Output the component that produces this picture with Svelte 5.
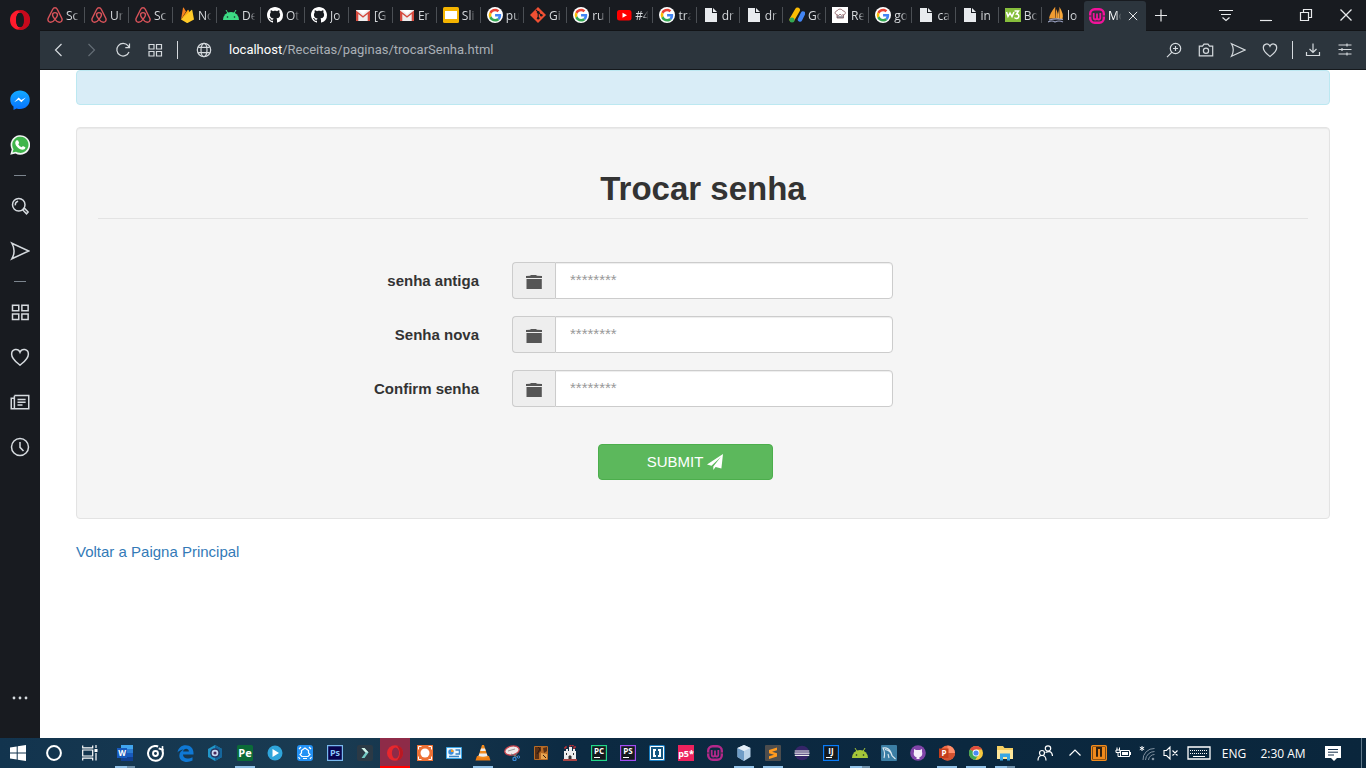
<script>
  const line = 'fill="none" stroke="#d5dade" stroke-width="1.2"';
  const google = '<circle cx="24" cy="24" r="24" fill="#fff"/><g transform="translate(5 5) scale(.8)"><path fill="#ea4335" d="M24 9.5c3.5 0 6.700 1.200 9.200 3.600l6.900-6.900C35.900 2.400 30.500 0 24 0 14.600 0 6.500 5.400 2.600 13.200l8 6.200C12.400 13.700 17.700 9.500 24 9.500z"/><path fill="#4285f4" d="M47 24.600c0-1.600-.2-3.100-.4-4.600H24v9h12.900c-.6 3-2.200 5.500-4.800 7.200l7.700 6C44.400 38 47 31.800 47 24.600z"/><path fill="#fbbc05" d="M10.500 28.600a14.500 14.500 0 0 1 0-9.200l-8-6.200a24 24 0 0 0 0 21.600z"/><path fill="#34a853" d="M24 48c6.500 0 11.900-2.100 15.900-5.800l-7.700-6c-2.200 1.500-4.900 2.300-8.200 2.300-6.300 0-11.600-4.200-13.500-9.900l-8 6.200C6.500 42.600 14.600 48 24 48z"/></g>';
  const octocat = 'M8 0C3.580 0 0 3.580 0 8c0 3.540 2.290 6.530 5.470 7.590.4.070.55-.17.55-.38 0-.19-.01-.82-.01-1.490-2.010.37-2.530-.49-2.690-.94-.09-.23-.48-.94-.82-1.130-.28-.15-.68-.52-.01-.53.63-.01 1.080.58 1.230.82.72 1.210 1.870.87 2.330.66.070-.52.28-.87.51-1.070-1.780-.2-3.640-.89-3.640-3.950 0-.87.31-1.590.82-2.150-.08-.2-.36-1.020.08-2.120 0 0 .67-.21 2.200.82.64-.18 1.320-.27 2-.27s1.360.09 2 .27c1.530-1.040 2.200-.82 2.200-.82.44 1.100.16 1.920.08 2.120.51.56.82 1.270.82 2.150 0 3.070-1.870 3.750-3.650 3.950.29.25.54.73.54 1.480 0 1.070-.01 1.930-.01 2.200 0 .21.15.46.55.38A8 8 0 0 0 16 8c0-4.420-3.580-8-8-8z';
  const wamp = (c) => `<rect x="1.200" y="1.200" width="13.600" height="13.600" rx="4.500" fill="none" stroke="${c}" stroke-width="2.400"/><path d="M4.700 5v4.500q0 2 1.600 2T8 9.500V5.500v4q0 2 1.700 2t1.600-2V5" fill="none" stroke="${c}" stroke-width="1.800"/><path d="M0 8h2.500M13.500 8H16" stroke="#2c353d" stroke-width="1.200"/>`;
  const doc = '<path d="M2 1h7v5h5v9H2z" fill="#e8ebee"/><path d="M10 1l4 4h-4z" fill="#e8ebee"/>';
  const gmail = '<path d="M1 3h14v11H1z" fill="#eee"/><path d="M1 14V3.500L8 9l7-5.500V14h-2.300V7L8 10.800 3.300 7v7z" fill="#d54a3e"/><path d="M3 3h10L8 7z" fill="#fff"/>';
  const jet = (t, c) => `<rect x=".6" y=".6" width="14.800" height="14.800" fill="#15191d" stroke="${c}" stroke-width="1.200"/><text x="8" y="9" text-anchor="middle" font-size="8" font-weight="700" fill="#fff">${t}</text><path d="M3 12.500h6" stroke="#fff"/>`;
  const droid = (c) => `<path d="M0 13a8 8 0 0 1 16 0z" fill="${c}"/><path d="M3 3l2 3.500M13 3l-2 3.500" stroke="${c}"/><circle cx="4.500" cy="10" r=".8" fill="#14242b"/><circle cx="11.500" cy="10" r=".8" fill="#14242b"/>`;

  const art = {
    airbnb: '<path d="M8 12.400C6.300 10.400 5.500 9.100 5.500 8c0-1.500 1.100-2.400 2.500-2.400s2.500.9 2.500 2.400c0 1.100-.8 2.400-2.500 4.400zm0 0C6.700 14.200 5.200 15.200 3.700 15.200c-2 0-3.400-1.700-2.500-4L5.600 2.500C6.200 1.300 6.900.8 8 .8s1.800.5 2.400 1.700l4.400 8.700c.9 2.300-.5 4-2.500 4-1.500 0-3-1-4.300-2.800z" fill="none" stroke="#d9535a" stroke-width="1.400"/>',
    firebase: '<path d="M2 12.500L4 .8q.3-.6.8 0L7 4.500z" fill="#f58220"/><path d="M2 12.500L8.700 3q.4-.6.8 0L12 8z" fill="#ffa712"/><path d="M2 12.500L12.500 3q.7-.5.800.2L15 12.500l-6 3.200q-.8.400-1.500 0z" fill="#ffca28"/>',
    android: droid('#3ddc84'), droid2: droid('#a4c639'),
    github: `<path d="${octocat}" fill="#fff"/>`,
    gmail, doc,
    slides: '<rect width="16" height="16" rx="1.500" fill="#f4b400"/><path d="M2 4h12v8H2z" fill="#fff"/>',
    git: '<path d="M8 0l8 8-8 8-8-8z" fill="#f05033"/><path d="M6 2.800l2.200 2.400v6M8.200 5.200l3.300 3.300" fill="none" stroke="#191b1f" stroke-width="1.100"/><circle cx="8.200" cy="5.300" r="1.300" fill="#191b1f"/><circle cx="8.200" cy="11.300" r="1.300" fill="#191b1f"/><circle cx="11.300" cy="8.300" r="1.300" fill="#191b1f"/>',
    youtube: '<rect x="1" y="3" width="14.500" height="10.500" rx="2.500" fill="#f00"/><path d="M6.500 5.700v5L11 8.200z" fill="#fff"/>',
    ads: '<path d="M8.500 3L3 12.500" stroke="#fbbc04" stroke-width="5" stroke-linecap="round"/><path d="M14 6.500L11 12.500" stroke="#4285f4" stroke-width="4.500" stroke-linecap="round"/><circle cx="3" cy="13" r="2.500" fill="#34a853"/>',
    chef: '<path d="M0 0h16v16H0z" fill="#fff"/><path d="M5 11V7.500C2.500 7.500 2.500 4 5 4c1-2.500 5-2.500 6 0 3-.2 3 3.500.5 4v3zM5 8q2 1.500 3-1 1 2.500 3.500.5" fill="none" stroke="#87555b" stroke-width=".8"/><path d="M5 10h6" stroke="#445"/>',
    w3: '<path d="M0 1h16v14H0z" fill="#86be3c"/><path d="M1.500 5l1.500 4.500L5 6l2 3.500L9 5" fill="none" stroke="#fff" stroke-width="1.500"/><path d="M9.500 4h4L11.500 7c3-.2 3.200 4.500 0 4.500q-1.500 0-2-1" fill="none" stroke="#fff" stroke-width="1.500"/>',
    sails: '<path d="M7 0Q2 6 1 11.500h6zM8 2q3 5 1 9.500H7z" fill="#ee9b31"/><path d="M11.500 0q4.500 7 3 12H9z" fill="#f8a83a"/><path d="M7.500 0v12M11.500 0v12" stroke="#704623" stroke-width=".6"/><path d="M1 13q7-2 14-.5M0 15q4-2 7 0 4-2 8 0" fill="none" stroke="#9aa1c0" stroke-width="1.200"/>',
    wamp: wamp('#f2129a'), wamp2: wamp('#b3288a'),
    back: `<path d="M10.500 2l-6 6 6 6" ${line}/>`,
    forward: '<path d="M5.500 2l6 6-6 6" fill="none" stroke="#646d75" stroke-width="1.200"/>',
    reload: `<path d="M14 10A6.300 6.300 0 1 1 13 3.700L14.200 5.500M14.500 1.500v4.200h-4.200" ${line}/>`,
    grid: `<path d="M2 2.500h5v4.500H2zM9.500 2.500h5v4.500h-5zM2 9.500h5V14H2zM9.500 9.500h5V14h-5z" ${line}/>`,
    globe: `<circle cx="8" cy="8" r="6.700" ${line}/><ellipse cx="8" cy="8" rx="3" ry="6.700" ${line}/><path d="M2.300 5.300h11.400M2.300 10.700h11.400" ${line}/>`,
    zoom: `<circle cx="9.500" cy="6.500" r="5.200" ${line}/><path d="M6 10.200l-5 5M7 6.500h5M9.500 4v5" ${line}/>`,
    camera: `<path d="M1.300 4.200h3.200l1.500-2h4l1.500 2h3.200v9.600H1.300z" ${line}/><circle cx="8" cy="8.700" r="2.600" ${line}/>`,
    send: `<path d="M1.500 1.800L15 8 1.500 14.200Q5 8 1.500 1.800z" ${line}/>`,
    heart: `<path d="M8 14.500C5 12 1.300 9.500 1.300 5.700c0-4.200 5.200-5 6.700-1.500 1.500-3.500 6.700-2.700 6.700 1.500 0 3.800-3.700 6.300-6.700 8.800z" ${line}/>`,
    download: `<path d="M8 1.500v9M4.500 7L8 10.500 11.500 7M1.500 10v3.500h13V10" ${line}/>`,
    sliders: `<path d="M1.500 3h13M1.500 7.500h13M1.500 12h13M10 1.500v3M5 6v3M10 10.500v3" ${line}/>`,
    close: '<path d="M2.500 2.500l11 11M13.500 2.500l-11 11" fill="none" stroke="#e8eaec" stroke-width="1.300"/>',
    plus: '<path d="M8 2.500v12M2 8.500h12" stroke="#e8eaec" stroke-width="1.200"/>',
    tabs: '<path d="M1 3.500h14M3 7.500h10M4.500 10.500L8 13.500l3.500-3" fill="none" stroke="#e8eaec" stroke-width="1.200"/>',
    min: '<path d="M2 13.500h12" stroke="#e8eaec" stroke-width="1.200"/>',
    restore: '<path d="M2.500 5.500h8v8h-8zM5.500 5V2.500h8v8H11" fill="none" stroke="#e8eaec" stroke-width="1.200"/>',
    opera: '<path fill-rule="evenodd" d="M8 0c4.600 0 8 3.500 8 8s-3.400 8-8 8-8-3.500-8-8 3.400-8 8-8zm0 2.200C5.800 2.200 5 5 5 8s.8 5.800 3 5.800S11 11 11 8s-.8-5.800-3-5.800z" fill="#ff1b2d"/><path d="M8 0c4.600 0 8 3.500 8 8s-3.400 8-8 8c-1 0-2-.2-2.500-.6C13 14 12.500 2 5.500.6 6.200.1 7 0 8 0z" fill="#a70014" fill-opacity=".65"/><ellipse cx="8" cy="8" rx="3.200" ry="5.800" fill="#181b20"/>',
    messenger: '<defs><linearGradient id="mg" x2="0" y2="1"><stop stop-color="#12aaff"/><stop offset="1" stop-color="#0872ff"/></linearGradient></defs><path d="M8 .3C3.500.3.200 3.500.200 7.700c0 2.300 1 4.200 2.600 5.500V16l2.500-1.300c.9.300 1.800.4 2.700.4 4.500 0 7.800-3.200 7.800-7.400S12.500.3 8 .3z" fill="url(#mg)"/><path d="M3.300 9.800l3.600-3.900L9 8l3.700-2.100-3.600 3.900-2.200-2z" fill="#fff"/>',
    whatsapp: '<path d="M.2 15.800l1.200-4.200A7.800 7.800 0 1 1 4.400 14.700z" fill="#f3f6f4"/><path d="M2 14l.8-2.700a6.500 6.500 0 1 1 2 2z" fill="#3fb54b"/><path d="M5.500 4.200l1 .1.800 2-.7 1q1 1.900 2.800 2.500l.9-1 2 1c0 1.500-1.300 2-2.300 2C7 11.500 4.300 8.500 4.200 6.300c0-.9.600-2 1.300-2.100z" fill="#fff"/>',
    search: `<circle cx="7" cy="7" r="5" ${line}/><path d="M4.300 7.500a3 3 0 0 1 2.200-3.300M10.500 10.700l1-1 3 3.100-1.300 1.500-3-3.100z" ${line}/>`,
    news: `<path d="M3.500 2.800h11.500v10.500H1V5h2.500v8M6 6h6.500M6 8.200h6.500M6 10.400h4M3.500 3v8" ${line}/>`,
    clock: `<circle cx="8" cy="8" r="6.800" ${line}/><path d="M8 4v4.300l2.800 2.900" ${line}/>`,
    dots: '<circle cx="2" cy="8" r="1.400" fill="#d5dade"/><circle cx="8" cy="8" r="1.400" fill="#d5dade"/><circle cx="14" cy="8" r="1.400" fill="#d5dade"/>',
    windows: '<path d="M0 2.500L6.700 1.500V7.500H0zM7.700 1.300L16 0v7.500H7.700zM0 8.500h6.700v6L0 13.500zM7.700 8.500H16V16l-8.300-1.300z" fill="#fff"/>',
    cortana: '<circle cx="8" cy="8" r="6.900" fill="none" stroke="#fff" stroke-width="2"/>',
    taskview: '<path d="M.7.500v2.300h10V.500M.7 15.500v-2.300h10v2.300M.7 5h10v6H.7zM14 0v3M14 8v7.500" fill="none" stroke="#fff" stroke-width="1.200"/><path d="M12.500 4h3v3h-3z" fill="#fff"/>',
    word: '<path d="M4 0h12v4H4z" fill="#41a5ee"/><path d="M4 4h12v4H4z" fill="#2b7cd3"/><path d="M4 8h12v4H4z" fill="#185abd"/><path d="M4 12h12v4H4z" fill="#103f91"/><path d="M0 3h10v10H0z" fill="#185abd"/><text x="5" y="11" text-anchor="middle" font-size="8" font-weight="700" fill="#fff">W</text>',
    groove: '<path d="M10.500 1.400A7 7 0 1 0 14.700 6V4.500L11 3.200" fill="none" stroke="#fff" stroke-width="1.900"/><circle cx="8" cy="8" r="2.300" fill="none" stroke="#fff" stroke-width="1.800"/><path d="M14.600 1v5" stroke="#fff" stroke-width="1.500"/>',
    edge: '<path d="M.5 7C1.300 2.800 4 .3 8.200.3c5 0 7.800 3.500 7.300 8.700H5.600c.2 4.500 5.400 4.600 9 2.500v3.200C9 17.500 2 15.500 2.200 9.800 2.400 7 4 5.300 6.200 4.300 4 4.500 1.800 5.400.5 7zm5.200-1h5.500c0-3.300-5-3.300-5.500 0z" fill="#0f78d4"/>',
    hexa: '<path d="M8 0l7 4v8l-7 4-7-4V4z" fill="#2196c9"/><path d="M8 0l7 4v8l-7 4z" fill="#15669c"/><circle cx="8" cy="8" r="4.800" fill="#253563"/><circle cx="8" cy="8" r="3.300" fill="#cad8ef"/><circle cx="8" cy="8" r="1.600" fill="#48295d"/>',
    pe: '<rect width="16" height="16" rx="1.500" fill="#0b6b38"/><text x="8" y="12" text-anchor="middle" font-size="11" font-weight="700" fill="#fff">Pe</text>',
    play: '<circle cx="8" cy="8" r="7.500" fill="#2fa5db"/><path d="M5.500 4v8l6.500-4z" fill="#fff"/>',
    hands: '<rect width="16" height="16" rx="3" fill="#2391f4"/><path d="M5 11.500L3 9.500l1.500-1.500V5.500L8 3l3.500 2.500V8L13 9.500l-2 2zM6 13.500h4M2 4l2-2M12 2l2 2M1.500 12l1.500 2M14.500 12L13 14" fill="none" stroke="#fff" stroke-width="1.200"/>',
    ps: '<path d="M.6.600h14.800v14.800H.6z" fill="#08044e" stroke="#78b8ee" stroke-width="1.200"/><text x="8" y="11" text-anchor="middle" font-size="9" font-weight="700" fill="#8cc8fb">Ps</text>',
    film: '<rect width="16" height="16" rx="2" fill="#2b3945"/><path d="M4.500 3h3l4 4.500-4 5.500h-3l4-5.500z" fill="#72c9c4"/><path d="M4.500 3h3l4 4.500H8.500z" fill="#d4f2ea"/>',
    operaTask: '<ellipse cx="8" cy="8" rx="8" ry="7.800" fill="#e8272d"/><ellipse cx="8.500" cy="8" rx="3.600" ry="5.500" fill="#8e2b48"/><path d="M10 .4a7.800 7.800 0 0 1 0 15.200Q13 12 13 8t-3-7.600z" fill="#b91822"/>',
    rec: '<path d="M0 0h16v16H0z" fill="#ed7135"/><circle cx="8" cy="8" r="4.500" fill="#fff"/><path d="M1.500 4.500v-3h3M11.500 1.500h3v3M14.500 11.500v3h-3M4.500 14.500h-3v-3" fill="none" stroke="#fff"/>',
    card: '<path d="M.5 2.500h15v11H.5z" fill="#e9f6ff" stroke="#3aa4e5"/><circle cx="5" cy="7" r="2.700" fill="#3c8cda"/><path d="M5 7V4.300A2.700 2.700 0 0 1 7.700 7z" fill="#f59b26"/><path d="M9.500 5h4v4h-4M3 11.500h10" fill="none" stroke="#3a83c4" stroke-width="1.500"/>',
    vlc: '<path d="M2 11h12l1.500 4.500H.5z" fill="#ef7d12"/><path d="M7 0h2l4 12.500q-5 2-10 0z" fill="#f38a1c"/><path d="M6 3.500h4l.8 2.500H5.200zM4.300 8.500h7.400l.8 2.400q-4.500 1.500-9 0z" fill="#eee"/>',
    snip: '<ellipse cx="8" cy="5.500" rx="7.300" ry="4.400" transform="rotate(-12 8 5.500)" fill="#f1e8e9" stroke="#c9434c" stroke-width="1.300"/><path d="M4 6l7-2" stroke="#999"/><path d="M7 9l7 3M13 8l-3 5" stroke="#777"/><circle cx="10.500" cy="14" r="1.600" fill="none" stroke="#3987d3" stroke-width="1.300"/><circle cx="14.500" cy="12" r="1.200" fill="none" stroke="#3987d3"/>',
    brown: '<rect x="1" y="1" width="14" height="14" rx="1" fill="#b96b25"/><path d="M2 2h6v4L6 8v6H2zM10 3l4-1v4l-3 2z" fill="#5a3015"/><path d="M8 8l6 1v5H8z" fill="#e8a450"/><path d="M5 2l2 2-3 5M10 10l3 3" fill="none" stroke="#2f1b12"/>',
    castle: '<path d="M2 6h2V4h2v2h1V2h3v4h1V4h2v2h1v9H2z" fill="#eee"/><path d="M8 2V0h3v1.500M3 4V2h2M12 4V2h2" fill="none" stroke="#e33"/><path d="M4.500 8v2M11.500 8v2M7 14v-3h2v3z" fill="#333" stroke="#333"/><path d="M1 15h14" stroke="#a44" stroke-width="2"/>',
    pc: jet('PC', '#21d789'), phps: jet('PS', '#a24df2'), ij: jet('IJ', '#087cfa'),
    brackets: '<rect width="16" height="16" rx="1.500" fill="#1a80c4"/><path d="M1.500 1.500h13v13h-13z" fill="#14567f" stroke="#fff"/><path d="M4 4h3v2H6v4h1v2H4zM12 4H9v2h1v4H9v2h3z" fill="#fff"/>',
    p5: '<path d="M0 0h16v16H0z" fill="#ed225d"/><text x="8" y="12" text-anchor="middle" font-size="9" font-weight="700" fill="#fff">p5*</text>',
    vbox: '<path d="M8 0l6.500 3v9L8 16l-6.500-4V3z" fill="#b8d2e8"/><path d="M1.500 3L8 6v10l-6.500-4z" fill="#6e9cc6"/><path d="M1.500 3L8 0l6.500 3L8 6z" fill="#e3eef7"/>',
    sublime: '<rect width="16" height="16" rx="1" fill="#4d4d4d"/><path d="M12 2.500L4 5v3.200l5 1.600-5 1.500v2.700l8-2.500V8.300L7 6.700l5-1.500z" fill="#ff9a1f"/>',
    eclipse: '<circle cx="8" cy="8" r="7.300" fill="#352568"/><path d="M.7 6h14.600M.5 8.200h15M.8 10.400h14.400" stroke="#eee" stroke-width="1.200"/>',
    mysql: '<rect width="16" height="16" rx="1" fill="#3b7ea4"/><path d="M3 13Q4.500 8 2 3q5.500-1 8 4.500l1.200 3.500 3.300 3M4 4.500q6 1 7 6.500M7 9l1 4" fill="none" stroke="#dbe8f0" stroke-width="1.100"/>',
    ghdesk: '<circle cx="8" cy="8" r="7.800" fill="#8044a8"/><path d="M4 4l2 1h4l2-1v3c1 3-1 5-2.500 5v2h-3v-2C5 12 3 10 4 7z" fill="#f5eef9"/>',
    ppt: '<circle cx="8.500" cy="8" r="7.500" fill="#ed6c47"/><path d="M8.500.5A7.500 7.500 0 0 1 16 8H8.500z" fill="#ff8f6b"/><path d="M1 8h15a7.500 7.500 0 0 1-15 0z" fill="#d35230"/><path d="M0 3.500h9.500V13H0z" fill="#c43e1c"/><text x="5" y="11" text-anchor="middle" font-size="8" font-weight="700" fill="#fff">P</text>',
    chrome: '<circle cx="8" cy="8" r="7" fill="#f7c93e"/><path d="M8 8L1.900 4.500A7 7 0 0 1 14.100 4.500H8z" fill="#dd4b3e"/><path d="M8 8L1.900 4.500a7 7 0 0 0 5.300 10.400L10.500 9.500z" fill="#3fa757"/><circle cx="8" cy="8" r="3.400" fill="#fff"/><circle cx="8" cy="8" r="2.600" fill="#4a8af4"/>',
    explorer: '<path d="M0 1h6l1.500 2H16v10H0z" fill="#f4cf63"/><path d="M0 5h16v9H0z" fill="#ffe79a"/><path d="M3 15.500V8.500h10v7h-3V12H6v3.500z" fill="#38a6e3"/>',
    people: '<g fill="none" stroke="#fff" stroke-width="1.200"><circle cx="5" cy="8" r="2.500"/><path d="M1 15.500q0-5 4-5t4 5"/><circle cx="11" cy="3.500" r="2.700"/><path d="M8.500 7.500q6.500-3 7 3.500"/></g>',
    up: '<path d="M2.500 10.500L8 5l5.500 5.500" fill="none" stroke="#fff" stroke-width="1.200"/>',
    wampTray: '<rect x=".7" y=".7" width="14.600" height="14.600" rx="1" fill="#33220f" stroke="#f08a1c" stroke-width="1.400"/><path d="M2 2h3v9q0 1 1 1t1-1V4h2v7q0 1 1 1t1-1V2h3v12H2z" fill="#f08a1c"/>',
    battery: '<path d="M5.500 5.500h9v6h-9zM15.500 7v3M2 2.500v3M4.500 2.500v3M1 5h4v2.500H1zM3 8v3.500h3" fill="none" stroke="#fff"/><path d="M7 7h6v3H7z" fill="#fff"/>',
    wifi: '<path d="M3 1v5M.8 2.200l4.400 2.500M5.200 2.200L.8 4.700" stroke="#fff"/><g fill="none" stroke="#8091a0"><path d="M4 15A11 11 0 0 1 15.500 3.500M6.500 15A9 9 0 0 1 15.500 6.500M9.500 15A6 6 0 0 1 15.500 9.500"/></g><circle cx="14" cy="14" r="1.300" fill="#8091a0"/>',
    mute: '<path d="M1 5.500h2.500L7 2v12L3.500 10.500H1zM9.500 5.500l5 5M14.500 5.500l-5 5" fill="none" stroke="#fff" stroke-width="1.100"/>',
    note: '<path d="M0 1h16v12h-4l-3 3-3-3H0z" fill="#fff"/><path d="M3 4.500h10M3 7.200h10M3 10h6" stroke="#17304a"/>'
  };

  const tabs = [
    ['airbnb', 'Sc'], ['airbnb', 'Ur'], ['airbnb', 'Sc'], ['firebase', 'No'], ['android', 'De'], ['github', 'Ot'], ['github', 'Jo'],
    ['gmail', '[G'], ['gmail', 'Er'], ['slides', 'Sli'], ['google', 'pu'], ['git', 'Gi'], ['google', 'ru'], ['youtube', '#4'], ['google', 'tra'],
    ['doc', 'dr'], ['doc', 'dr'], ['ads', 'Go'], ['chef', 'Re'], ['google', 'go'], ['doc', 'ca'], ['doc', 'in'], ['w3', 'Bo'], ['sails', 'lo']
  ];
  const side = ['messenger', 'whatsapp', '-', 'search', 'send', '-', 'grid', 'heart', 'news', 'clock'];
  const apps = [
    ['word', 2], ['groove'], ['edge'], ['hexa'], ['pe', 1], ['play'], ['hands'], ['ps'], ['film'], ['operaTask', 3], ['rec'], ['card'],
    ['vlc', 1], ['snip'], ['brown'], ['castle'], ['pc'], ['phps'], ['brackets'], ['p5'], ['wamp2'], ['vbox', 1], ['sublime', 1],
    ['eclipse'], ['ij'], ['droid2', 2], ['mysql'], ['ghdesk'], ['ppt', 1], ['chrome', 1], ['explorer', 2]
  ];
  const fields = [['antiga', 'senha antiga'], ['nova', 'Senha nova'], ['confirm', 'Confirm senha']];
</script>

{#snippet icon(name, size = 16)}
  <svg class="icon" width={size} height={size} viewBox={name === 'google' ? '0 0 48 48' : '0 0 16 16'} aria-hidden="true">{@html name === 'google' ? google : art[name]}</svg>
{/snippet}

<div class="desktop">
  <div class="browser">
    <aside>
      <button class="menu" aria-label="Opera">{@render icon('opera', 20)}</button>
      {#each side as s}
        {#if s === '-'}<span class="dash"></span>
        {:else}<button class="side" aria-label={s}>{@render icon(s, 20)}</button>{/if}
      {/each}
      <button class="side more" aria-label="Mais">{@render icon('dots')}</button>
    </aside>
    <div class="window">
      <div class="tabbar">
        <div class="tabs">
          {#each tabs as [ic, label], i}
            <button class="tab" class:wide={i < 10}>{@render icon(ic)}<span>{label}</span></button>
          {/each}
        </div>
        <div class="tab active">{@render icon('wamp')}<span>Mo</span><button class="x" aria-label="Fechar aba">{@render icon('close', 12)}</button></div>
        <button class="add" aria-label="Nova aba">{@render icon('plus')}</button>
        <div class="controls">
          {#each ['tabs', 'min', 'restore', 'close'] as c}<button aria-label={c}>{@render icon(c)}</button>{/each}
        </div>
      </div>
      <nav class="toolbar">
        {#each ['back', 'forward', 'reload', 'grid'] as c}<button aria-label={c}>{@render icon(c)}</button>{/each}
        <span class="bar"></span>
        <button class="site" aria-label="Site">{@render icon('globe')}</button>
        <div class="url"><b>localhost</b>/Receitas/paginas/trocarSenha.html</div>
        {#each ['zoom', 'camera', 'send', 'heart'] as c}<button aria-label={c}>{@render icon(c)}</button>{/each}
        <span class="bar right"></span>
        {#each ['download', 'sliders'] as c}<button aria-label={c}>{@render icon(c)}</button>{/each}
      </nav>
      <main>
        <div class="container">
          <div class="alert"></div>
          <form class="well" onsubmit={(e) => e.preventDefault()}>
            <h2>Trocar senha</h2>
            {#each fields as [id, label]}
              <div class="row">
                <label for={id}>{label}</label>
                <div class="group">
                  <span class="addon"><svg width="16" height="14" viewBox="0 0 16 14" aria-hidden="true"><path d="M0 3V1L4 .8 5 0h5l1 .8 5 .2v2zM.5 4h15.300v10H.5z" fill="#555" /></svg></span>
                  <input {id} type="password" placeholder="********" />
                </div>
              </div>
            {/each}
            <div class="row actions">
              <div class="center"><button type="submit">SUBMIT <svg width="16" height="16" viewBox="0 0 16 16" aria-hidden="true"><path d="M16 0L0 10.500l4.500 1.300L13.800 3 6.300 12.400V16l2.300-2.900 5.800 1.400z" fill="#fff" /></svg></button></div>
            </div>
          </form>
          <a href="#principal">Voltar a Paigna Principal</a>
        </div>
      </main>
    </div>
  </div>
  <footer>
    <div class="system">
      {#each ['windows', 'cortana', 'taskview'] as c}<button aria-label={c}>{@render icon(c)}</button>{/each}
    </div>
    <div class="apps">
      {#each apps as [ic, st], i}
        <button class:wide={i < 10} class:open={st === 1} class:multi={st === 2} class:current={st === 3} aria-label={ic}>{@render icon(ic, ic === 'groove' || ic === 'edge' ? 17 : 16)}</button>
      {/each}
    </div>
    <div class="tray">
      {#each ['people', 'up', 'wampTray', 'battery', 'wifi', 'mute'] as c}<button aria-label={c}>{@render icon(c)}</button>{/each}
      <button class="keys" aria-label="Teclado"><svg width="24" height="14" viewBox="0 0 24 14" aria-hidden="true"><path d="M1 1h22v12H1z" fill="none" stroke="#fff" stroke-width="1.300" /><path d="M3 4.500h18M3 7.500h18" stroke="#fff" stroke-dasharray="1 1" /><path d="M6 10.500h12" stroke="#fff" /></svg></button>
      <span class="lang">ENG</span>
      <time>2:30 AM</time>
      <button class="notes" aria-label="Notificações">{@render icon('note')}</button>
      <span class="peek"></span>
    </div>
  </footer>
</div>

<style>
  :global(body) { margin: 0; }
  .desktop, .desktop * { box-sizing: border-box; }
  .desktop { display: flex; flex-direction: column; min-height: 100vh; font-family: "Open Sans", "Noto Sans", sans-serif; background: #fff; }
  button { border: 0; padding: 0; margin: 0; background: none; color: inherit; font: inherit; display: flex; align-items: center; justify-content: center; }
  svg { display: block; flex: none; }
  .browser { flex: 1; display: flex; }
  aside { width: 40px; flex: none; background: #181b20; display: flex; flex-direction: column; align-items: center; }
  .menu { height: 40px; width: 40px; margin-bottom: 37px; }
  .side { width: 40px; height: 45px; }
  .dash { width: 12px; height: 16px; flex: none; background: linear-gradient(#7c858e, #7c858e) center / 12px 1px no-repeat; }
  .more { margin-top: auto; margin-bottom: 18px; }
  .window { flex: 1; min-width: 0; display: flex; flex-direction: column; }
  .tabbar { height: 31px; background: #181b20; display: flex; font-size: 12px; color: #d6d9dc; border-bottom: 1px solid #121417; }
  .tabs { flex: 1; min-width: 0; display: flex; }
  .tab { display: flex; align-items: center; justify-content: flex-start; gap: 3px; padding-left: 7px; }
  .tabs .tab { flex: 43 1 0; min-width: 0; overflow: hidden; background: linear-gradient(#4b4f54, #4b4f54) left center / 1px 16px no-repeat; }
  .tabs .wide { flex-grow: 44; }
  .tabs .tab:first-child { background: none; }
  .tab span { width: 15px; overflow: hidden; white-space: nowrap; text-align: left; flex: none; mask-image: linear-gradient(90deg, #000 50%, transparent 90%); }
  .active { width: 62px; height: 31px; margin-top: 1px; background: #2c353d; border-radius: 3px 3px 0 0; color: #fff; padding: 0 0 2px 5px; }
  .active .x { margin-left: 1px; }
  .add { width: 30px; }
  .controls { display: flex; margin-left: 30px; }
  .controls button { width: 40px; }
  .toolbar { height: 39px; background: #2c353d; border-bottom: 1px solid #15191d; display: flex; align-items: center; padding: 0 5px 0 3px; }
  .toolbar button { width: 32px; height: 32px; }
  .bar { width: 1px; height: 18px; background: #d5dade; margin: 0 10px 0 6px; }
  .bar.right { margin: 0 4px 0 6px; }
  .url { flex: 1; min-width: 0; font: 13px/18px Roboto, "Open Sans", sans-serif; color: #a9afb5; padding-left: 9px; white-space: nowrap; overflow: hidden; }
  .url b { font-weight: 400; color: #fff; }
  main { flex: 1; background: #fff; padding: 0 36px; font: 15px/22px "Liberation Sans", Arial, sans-serif; color: #333; }
  .container { max-width: 1254px; margin: 0 auto; }
  .alert { height: 35px; border: 1px solid #bce8f1; border-radius: 4px; background: #d9edf7; margin-bottom: 22px; }
  .well { border: 1px solid #e3e3e3; border-radius: 4px; background: #f5f5f5; box-shadow: inset 0 1px 1px rgba(0, 0, 0, .05); padding: 43px 21px 38px; margin-bottom: 22px; }
  h2 { margin: 0 0 43px; padding-bottom: 11px; border-bottom: 1px solid #e3e3e3; font-size: 33px; line-height: 36px; text-align: center; }
  .row { display: grid; grid-template-columns: repeat(3, 1fr); margin: 0 -16px 17px; }
  label { font-weight: 700; text-align: right; padding: 8px 17px 0; }
  .group { display: flex; padding: 0 17px 0 16px; height: 37px; }
  .addon { width: 43px; flex: none; display: flex; align-items: center; justify-content: center; padding-top: 2px; background: #eee; border: 1px solid #ccc; border-right: 0; border-radius: 4px 0 0 4px; }
  input { flex: 1; min-width: 0; width: 100%; border: 1px solid #ccc; border-radius: 0 4px 4px 0; background: #fff; box-shadow: inset 0 1px 1px rgba(0, 0, 0, .075); padding: 0 14px 2px; font: inherit; color: #555; }
  input::placeholder { color: #999; opacity: 1; }
  .actions { margin-top: 37px; margin-bottom: 0; }
  .center { grid-column: 2; display: flex; justify-content: center; padding-right: 36px; }
  .center button { width: 175px; height: 36px; gap: 4px; border: 1px solid #4cae4c; border-radius: 4px; background: #5cb85c; color: #fff; }
  a { color: #337ab7; text-decoration: none; }
  footer { height: 30px; display: flex; color: #fff; background: linear-gradient(90deg, #12344e, #1a3b52 24%, #0c2a42 42%, #0a263c); }
  .system { display: flex; margin-right: 2px; }
  .system button { width: 36px; }
  .apps { flex: 1; min-width: 0; display: flex; }
  .apps button { flex: 29 1 0; min-width: 0; }
  .apps .wide { flex-grow: 30; }
  .open { background: linear-gradient(#91c1e7, #91c1e7) center bottom / 20px 2px no-repeat; }
  .multi { background: linear-gradient(90deg, #91c1e7 60%, #6d8ea8 60%) center bottom / 20px 2px no-repeat; }
  .current { background: linear-gradient(#f00, #f00) center bottom / 100% 2px no-repeat #8e2b48; }
  .tray { display: flex; align-items: center; padding-left: 14px; font-size: 12px; }
  .tray button { width: 24px; height: 30px; }
  .tray button:first-child { width: 24px; margin-right: 6px; }
  .tray .keys { width: 32px; }
  .lang { width: 38px; text-align: center; }
  time { width: 60px; text-align: center; white-space: nowrap; }
  .tray .notes { width: 40px; }
  .peek { width: 1px; height: 30px; background: #60788a; margin: 0 4px 0 8px; }
</style>
